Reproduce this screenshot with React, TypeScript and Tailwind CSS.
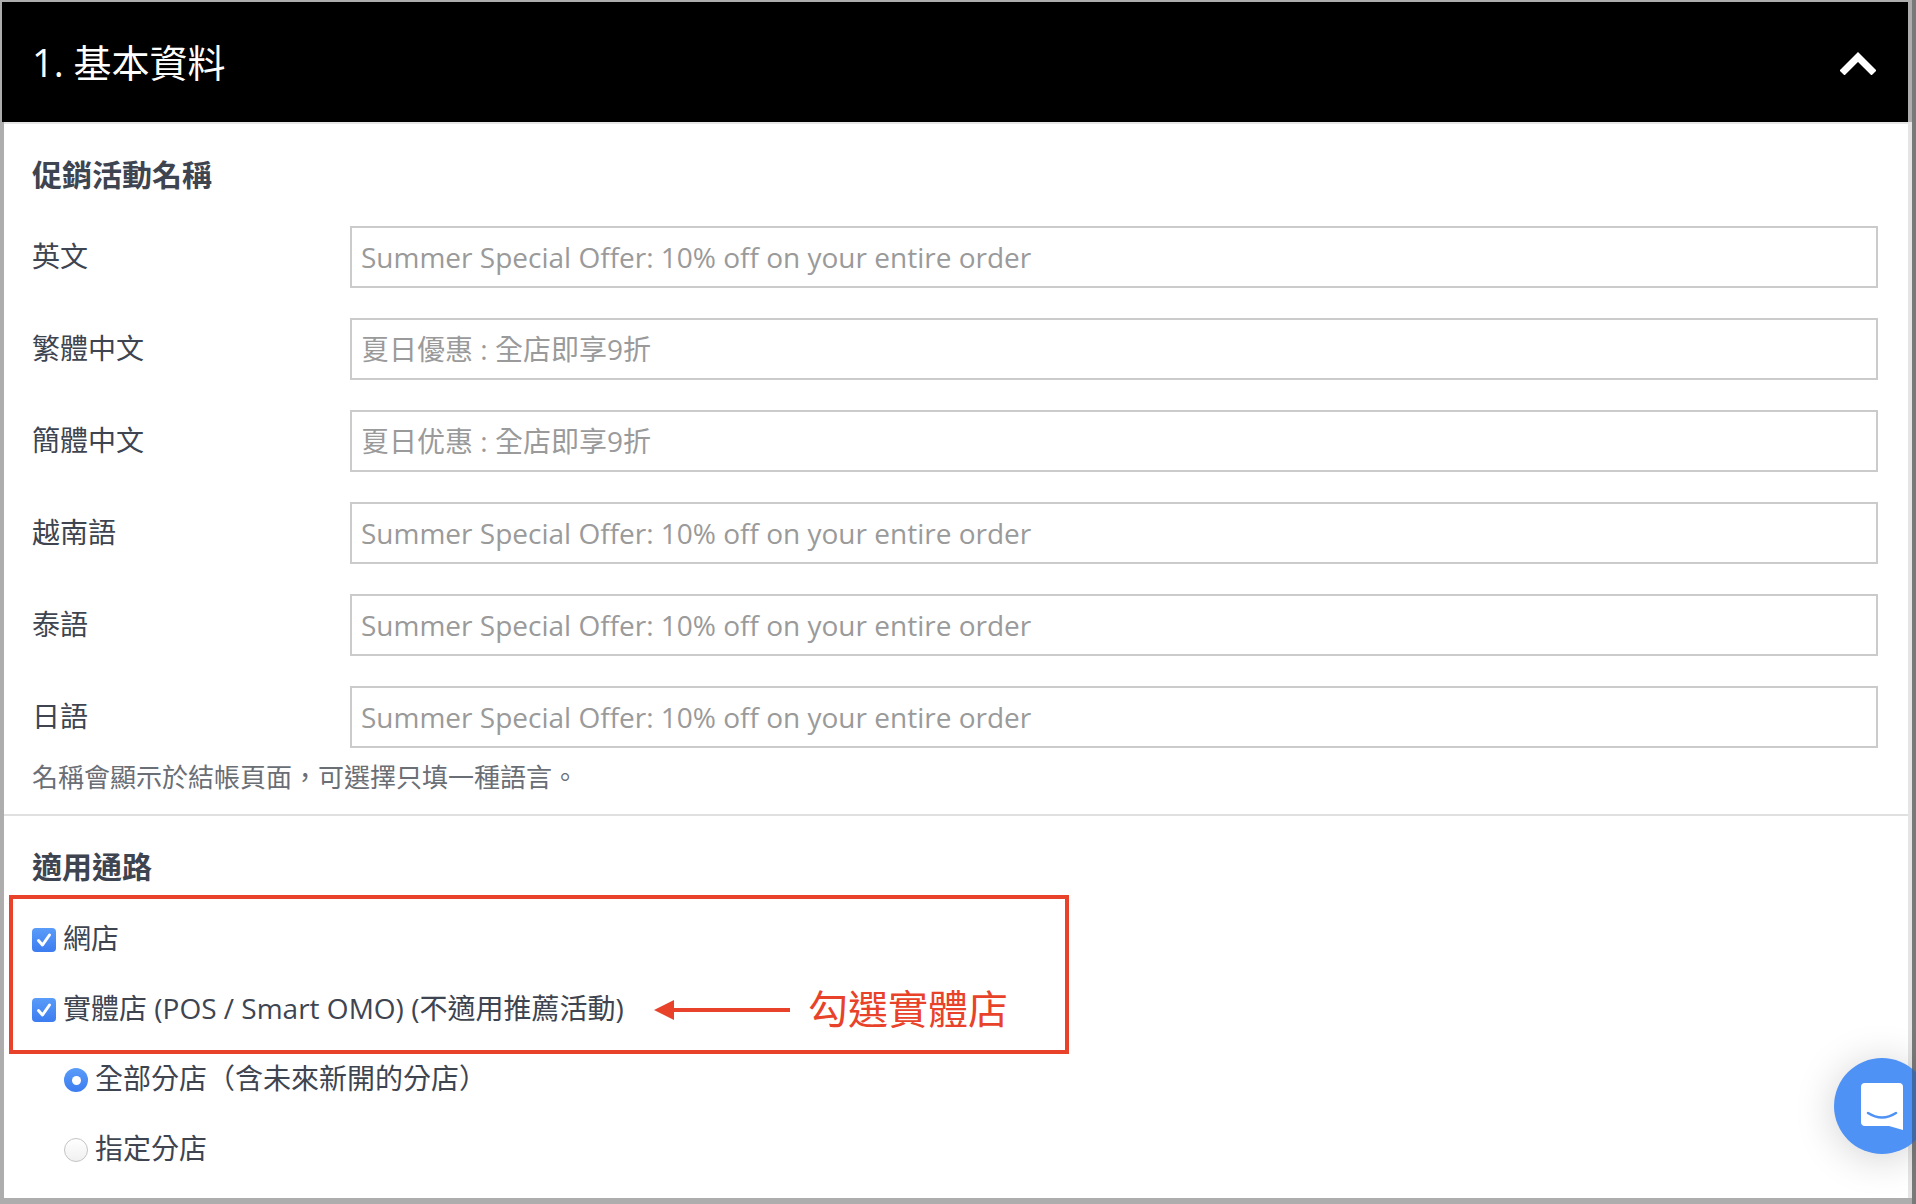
const fontCls = "font-['Open_Sans','Noto_Sans_CJK_TC',sans-serif]";

const nameRows = [
  { label: '英文', placeholder: 'Summer Special Offer: 10% off on your entire order' },
  { label: '繁體中文', placeholder: '夏日優惠 : 全店即享9折' },
  { label: '簡體中文', placeholder: '夏日优惠 : 全店即享9折' },
  { label: '越南語', placeholder: 'Summer Special Offer: 10% off on your entire order' },
  { label: '泰語', placeholder: 'Summer Special Offer: 10% off on your entire order' },
  { label: '日語', placeholder: 'Summer Special Offer: 10% off on your entire order' },
];

function BlueCheck() {
  return (
    <span className="flex h-6 w-6 shrink-0 items-center justify-center rounded-[4px] bg-gradient-to-b from-[#5a9cf8] to-[#3c7cf0]">
      <svg width="18" height="18" viewBox="0 0 18 18" fill="none">
        <path d="M3.5 9.5 L7.5 14 L14.5 4" stroke="#fff" strokeWidth="3" strokeLinecap="round" strokeLinejoin="round" />
      </svg>
    </span>
  );
}

function Radio({ on }: { on?: boolean }) {
  return on ? (
    <span className="flex h-6 w-6 shrink-0 items-center justify-center rounded-full bg-gradient-to-b from-[#5a9cf8] to-[#3c7cf0]">
      <span className="h-[9px] w-[9px] rounded-full bg-white" />
    </span>
  ) : (
    <span className="h-6 w-6 shrink-0 rounded-full border border-[#c4c4c4] bg-gradient-to-b from-white to-[#f0f0f0]" />
  );
}

export default function App() {
  return (
    <div className={`${fontCls} relative flex h-[1204px] w-[1916px] flex-col overflow-hidden bg-[#adadad] pb-[6px] pl-[2px] pr-[4px] pt-[2px]`}>
      {/* Section header */}
      <header className="flex h-[120px] w-[1906px] shrink-0 items-center justify-between bg-black pl-[30px] pr-[32px] text-white">
        <h2 className="text-[38px] leading-none">1. 基本資料</h2>
        <svg width="36" height="24" viewBox="0 0 36 24" className="mt-[2px]">
          <path d="M4.5 19.5 L18 6 L31.5 19.5" fill="none" stroke="#fff" strokeWidth="7" strokeLinecap="square" />
        </svg>
      </header>

      {/* Form body */}
      <div className="ml-[1.5px] flex min-h-0 flex-1 flex-col border-r-4 border-t-2 border-r-[#e5e5e5] border-t-[#e5e5e5] bg-white text-[#3e4450]">
        <div className="pl-[28.5px] pr-[30px] pt-[31px]">
          <h3 className="text-[30px] font-bold leading-[40px]">促銷活動名稱</h3>
          <div className="mt-[31px] flex flex-col gap-[30px]">
            {nameRows.map((row) => (
              <div key={row.label} className="grid grid-cols-[318px_1fr]">
                <label className="text-[28px] leading-[60px]">{row.label}</label>
                <input
                  className="h-[62px] w-full border-2 border-[#cbcbcb] bg-white px-[9px] text-[28px] outline-none placeholder:text-[#9a9a9a]"
                  placeholder={row.placeholder}
                />
              </div>
            ))}
          </div>
          <p className="mt-[11px] text-[26px] leading-[36px] text-[#6a6e75]">名稱會顯示於結帳頁面，可選擇只填一種語言。</p>
        </div>

        <div className="mt-[19px] h-[2px] bg-[#e0e0e0]" />

        <div className="pl-[28.5px] pt-[31px]">
          <h3 className="text-[30px] font-bold leading-[40px]">適用通路</h3>
          <div className="mt-[35px] flex flex-col gap-[34px] text-[28px] leading-[36px]">
            <div className="flex h-9 items-center gap-[7px]">
              <BlueCheck />
              <span className="-translate-y-[2px]">網店</span>
            </div>
            <div className="flex h-9 items-center gap-[7px]">
              <BlueCheck />
              <span className="-translate-y-[2px]">實體店 (POS / Smart OMO) (不適用推薦活動)</span>
            </div>
            <div className="ml-8 flex h-9 items-center gap-[7px]">
              <Radio on />
              <span className="-translate-y-[2px]">全部分店（含未來新開的分店）</span>
            </div>
            <div className="ml-8 flex h-9 items-center gap-[7px]">
              <Radio />
              <span className="-translate-y-[2px]">指定分店</span>
            </div>
          </div>
        </div>
      </div>

      {/* Annotation overlay */}
      <div className="absolute left-[9px] top-[895px] flex h-[159px] w-[1060px] items-end border-4 border-[#e8432a] pb-[13px] pl-[641px] text-[#e8432a]">
        <svg width="136" height="22" viewBox="0 0 136 22" className="mb-[16px] shrink-0">
          <path d="M0 11 L20 1 V9 H136 V13 H20 V21 Z" fill="#e8432a" />
        </svg>
        <span className="ml-[18px] text-[40px] leading-[56px]">勾選實體店</span>
      </div>

      {/* Chat launcher */}
      <div className="absolute left-[1834px] top-[1058px] flex h-24 w-24 items-center justify-center rounded-full bg-[#4f92f5] shadow-[0_4px_40px_rgba(0,0,0,0.18)]">
        <svg width="42" height="48" viewBox="0 0 42 48" className="mt-[2px]">
          <path d="M4 0 H38 Q42 0 42 4 V47 L28 43 H4 Q0 43 0 39 V4 Q0 0 4 0 Z" fill="#fff" />
          <path d="M7 30 Q21 39 35 30" fill="none" stroke="#4f92f5" strokeWidth="2.5" strokeLinecap="round" />
        </svg>
      </div>

      {/* Window edge on top of the launcher */}
      <div className="absolute right-0 top-0 h-full w-1 bg-[#2a2a2a]/40" />
    </div>
  );
}
